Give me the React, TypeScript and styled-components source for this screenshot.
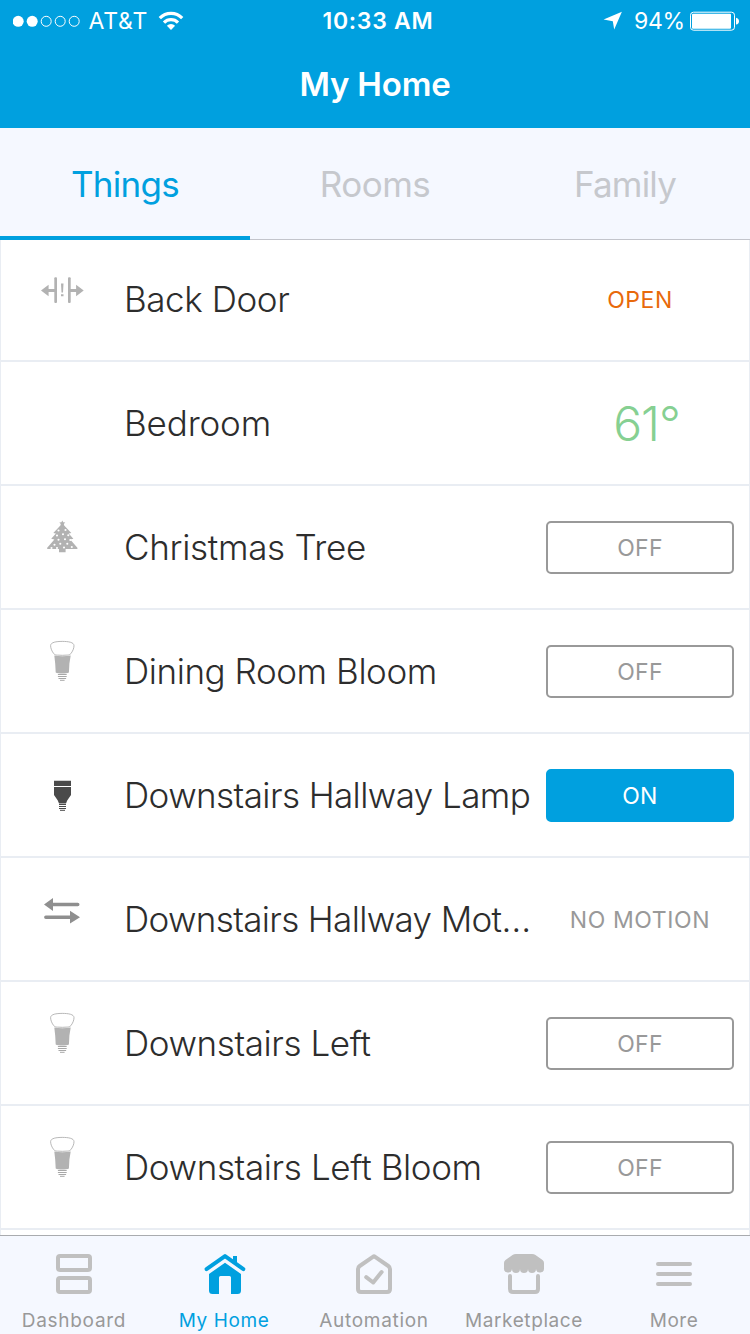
import React from "react";
import styled, { createGlobalStyle } from "styled-components";

const BLUE = "#00a0df";
const PALE = "#f5f8ff";
const LINE = "#e9edf3";

const GlobalStyle = createGlobalStyle`
  *, *::before, *::after { box-sizing: border-box; }
  body {
    margin: 0;
    background: #fff;
    font-family: Inter, "Liberation Sans", sans-serif;
    overflow: hidden;
  }
`;

const Screen = styled.div`
  display: flex;
  flex-direction: column;
  width: 750px;
  height: 1334px;
  overflow: hidden;
  background: #fff;
`;

const Header = styled.header`
  flex: none;
  height: 128px;
  background: ${BLUE};
  color: #fff;
`;

const StatusBar = styled.div`
  display: grid;
  grid-template-columns: 1fr 112px 1fr;
  align-items: center;
  height: 40px;
  padding: 0 11px 0 13px;
  font-size: 23px;
  white-space: nowrap;
`;

const StatusGroup = styled.div<{ $end?: boolean }>`
  display: flex;
  align-items: center;
  height: 40px;
  justify-content: ${(p) => (p.$end ? "flex-end" : "flex-start")};
  svg { display: block; flex: none; }
`;

const StatusText = styled.span<{ $tracking?: number; $left?: number; $right?: number }>`
  line-height: 40px;
  padding-top: 1px;
  letter-spacing: ${(p) => p.$tracking ?? 0}px;
  margin-left: ${(p) => p.$left ?? 0}px;
  margin-right: ${(p) => p.$right ?? 0}px;
`;

const Clock = styled.span`
  line-height: 40px;
  padding: 1px 0 0 2.5px;
  font-weight: 600;
  text-align: left;
  letter-spacing: 0.7px;
`;

const Title = styled.h1`
  margin: 0;
  line-height: 88px;
  text-align: center;
  font-size: 33px;
  font-weight: 600;
  letter-spacing: -0.2px;
`;

const Tabs = styled.nav`
  flex: none;
  position: relative;
  z-index: 1;
  display: grid;
  grid-template-columns: repeat(3, 1fr);
  height: 112px;
  background: ${PALE};
  box-shadow: inset 0 -1px 0 #c3c5cc;
`;

const Tab = styled.a<{ $active?: boolean; $tracking: number }>`
  border-bottom: 4px solid ${(p) => (p.$active ? BLUE : "transparent")};
  color: ${(p) => (p.$active ? BLUE : "#c6c8cd")};
  line-height: 113px;
  height: 112px;
  text-align: center;
  font-size: 35px;
  font-weight: 400;
  letter-spacing: ${(p) => p.$tracking}px;
`;

const List = styled.main`
  flex: 1;
  min-height: 0;
  margin-top: -2px;
  overflow: hidden;
  border: solid ${LINE};
  border-width: 0 1px;
`;

const Row = styled.div`
  display: grid;
  grid-template-columns: 123px 422px 188px;
  height: 124px;
  border-bottom: 2px solid ${LINE};
`;

const IconCell = styled.div`
  padding: 20px 0 0 29px;
  svg { display: block; }
`;

const Name = styled.div<{ $tracking: number }>`
  line-height: 122px;
  height: 122px;
  font-size: 35px;
  font-weight: 300;
  color: #2d2d2d;
  white-space: nowrap;
  letter-spacing: ${(p) => p.$tracking}px;
`;

const Action = styled.div`
  display: flex;
  align-items: center;
  justify-content: center;
  height: 123px;
`;

const Toggle = styled.button<{ $on?: boolean }>`
  width: 188px;
  height: 53px;
  padding: 1px 0 0;
  border: 2px solid ${(p) => (p.$on ? BLUE : "#999")};
  border-radius: 5px;
  background: ${(p) => (p.$on ? BLUE : "#fff")};
  color: ${(p) => (p.$on ? "#fff" : "#999")};
  font: 400 23px/48px Inter, "Liberation Sans", sans-serif;
  letter-spacing: 0.3px;
`;

const State = styled.span<{ $color: string; $tracking: number }>`
  color: ${(p) => p.$color};
  font-size: 23px;
  letter-spacing: ${(p) => p.$tracking}px;
`;

const Temperature = styled.span`
  padding-left: 13px;
  color: #86d092;
  font-size: 48px;
  font-weight: 300;
  letter-spacing: -1px;
`;

const BottomBar = styled.nav`
  flex: none;
  display: grid;
  grid-template-columns: repeat(5, 150px);
  width: 750px;
  height: 99px;
  border-top: 1px solid #a9abaf;
  background: ${PALE};
`;

const BottomItem = styled.a<{ $active?: boolean; $tracking: number }>`
  display: flex;
  flex-direction: column;
  align-items: center;
  padding: 14px 2px 0 0;
  color: ${(p) => (p.$active ? BLUE : "#999")};
  font-size: 19px;
  line-height: 24px;
  letter-spacing: ${(p) => p.$tracking}px;
  svg { display: block; margin-bottom: 11px; }
`;

const SignalDots = () => (
  <svg width="68" height="12" viewBox="0.3 0 68 12">
    {[5.5, 19.5, 33.5, 47.5, 61.5].map((cx, i) =>
      i < 2 ? (
        <circle key={cx} cx={cx} cy="6.3" r="5.5" fill="#fff" />
      ) : (
        <circle key={cx} cx={cx} cy="6.3" r="5" fill="none" stroke="#fff" strokeWidth="1" />
      )
    )}
  </svg>
);

const Wifi = () => (
  <svg width="26" height="20" viewBox="0 0 26 20">
    <g fill="none" stroke="#fff" strokeWidth="3.2">
      <path d="M1.8 7.2a15.6 15.6 0 0 1 22.4 0" />
      <path d="M6 11.6a9.8 9.8 0 0 1 14 0" />
    </g>
    <path d="M13 19l-4.1-4.3a5.8 5.8 0 0 1 8.2 0z" fill="#fff" />
  </svg>
);

const LocationArrow = () => (
  <svg width="19" height="19" viewBox="0 0 19 19">
    <path d="M18.9.8L11.2 18.4 9.800 10.2.6 8.4z" fill="#fff" />
  </svg>
);

const Battery = () => (
  <svg width="49" height="20" viewBox="0 0 49 20">
    <rect x=".5" y="1.2" width="44" height="18" rx="3" fill="none" stroke="#fff" />
    <rect x="2" y="2.7" width="39" height="15" rx="1" fill="#fff" />
    <path d="M46 6.8c2 .4 3 1.6 3 3.4s-1 3-3 3.4z" fill="#fff" />
  </svg>
);

const DoorIcon = () => (
  <svg width="64" height="80" viewBox="0 0 64 80" fill="#b2b2b2">
    <rect x="24.3" y="19.3" width="2.7" height="25.7" rx="1" />
    <rect x="38" y="19.3" width="2.7" height="25.7" rx="1" />
    <path d="M11 32.5l7.6-5.7V31H25v3h-6.4v4.2zM53.7 32.5l-7.6-5.700V31H40v3h6.1v4.2z" />
    <path d="M31 25.5h2.5l-.5 9h-1.5zM31 36.3h2.5v1.9H31z" />
  </svg>
);

const TREE_LIGHTS = [
  [28.5, 24.5], [35.5, 24], [33, 28.3], [27, 29.5], [38.3, 29.3],
  [28.5, 33.8], [35, 33.3], [40.3, 34], [30.3, 37.8], [37.3, 37.8],
  [24.5, 38.8], [21.5, 42], [27, 42], [34, 41.5], [41.8, 41],
];

const TreeIcon = () => (
  <svg width="64" height="80" viewBox="0 0 64 80">
    <path
      fill="#b2b2b2"
      d="M32.3 14.4l.9 1.900 2.1.2-1.5 1.500.4 1.400 7.1 7.600-2.600.6 4.700 5.200-3.200.6 7.200 8.400v1.300h-11.800v3.100h-6.600v-3.100H17.200v-1.300l7.200-8.400-3.200-.6 4.700-5.200-2.600-.6 7.100-7.600.4-1.400-1.500-1.500 2.100-.2z"
    />
    <g fill="#fff">
      {TREE_LIGHTS.map(([x, y]) => (
        <circle key={`${x}-${y}`} cx={x} cy={y} r="1.05" />
      ))}
    </g>
  </svg>
);

const BulbIcon = () => (
  <svg width="64" height="80" viewBox="0 0 64 80">
    <g fill="none" stroke="#b0b0b0" strokeWidth=".9">
      <path d="M32.3 11.4c6 0 11.7.8 11.7 4.3 0 2.6-1.4 5.8-3.2 8-.9 1.1-2 1.3-3.6 1.4-3.2.3-6.6.3-9.8 0-1.6-.1-2.7-.3-3.6-1.4-1.8-2.2-3.2-5.4-3.2-8 0-3.5 5.7-4.3 11.7-4.3z" />
    </g>
    <path d="M24.3 25.5c5 1 11 1 16.4 0l-1.3 8-.5 9.1c-2.2 1.3-11 1.3-13.2 0l-.5-9.1z" fill="#b2b2b2" />
    <path d="M27.9 44.5h8.8M27.9 46.5h8.8M28.500 48.5h7.6M30 50.3h4.6" stroke="#a8a8a8" strokeWidth="1" />
  </svg>
);

const LampIcon = () => (
  <svg width="64" height="80" viewBox="0 0 64 80">
    <path
      d="M24 26.7h17V32H24zM24 33h17v8l-3.8 5.5-1.2 3h-7l-1.2-3L24 41z"
      fill="#4a4a4a"
    />
    <path d="M29 50.5h7M29 52.5h7M29 54.5h7M30 56.3h5" stroke="#4a4a4a" strokeWidth="1" />
  </svg>
);

const MotionIcon = () => (
  <svg width="64" height="80" viewBox="0 0 64 80">
    <path d="M22 26.5h25.8M15.8 39.2H42" stroke="#8f8f8f" strokeWidth="3.4" strokeLinecap="round" />
    <path d="M14 26.5l9-6.5v13zM50 39.2l-10-6.4v12.8z" fill="#8f8f8f" />
  </svg>
);

const DashboardIcon = () => (
  <svg width="48" height="48" viewBox="0 0 48 48" fill="none" stroke="#c0c0c0" strokeWidth="4">
    <rect x="8" y="6" width="32" height="14" rx="2" />
    <rect x="8" y="28" width="32" height="14" rx="2" />
  </svg>
);

const HomeIcon = () => (
  <svg width="48" height="48" viewBox="-0.7 0 48 48" fill={BLUE}>
    <path d="M5.8 19.2L24.3 6.1l18.4 13.1" fill="none" stroke={BLUE} strokeWidth="4" strokeLinecap="round" strokeLinejoin="round" />
    <path d="M32.3 6h4v9l-4-3z" />
    <path d="M24.3 12.7L40.3 24v16.5q0 3.5-3.5 3.5H30.3V27.5q0-1.500-1.5-1.5h-9q-1.500 0-1.5 1.5V44h-6.5q-3.5 0-3.5-3.5V24z" />
  </svg>
);

const AutomationIcon = () => (
  <svg width="48" height="48" viewBox="0 0 48 48" fill="none" stroke="#c0c0c0" strokeWidth="4" strokeLinecap="round" strokeLinejoin="round">
    <path d="M24 6.2L38.3 16q1.7 1.2 1.7 3v20q0 3-3 3H11q-3 0-3-3V19q0-1.8 1.7-3z" />
    <path d="M16.2 27.2l7 5.3L31.6 22" />
  </svg>
);

const MarketIcon = () => (
  <svg width="48" height="48" viewBox="0 0 48 48">
    <path
      fill="#c0c0c0"
      d="M16 4h16q2 0 3.5 1l7 5q1.5 1.2 1.5 3v5a4 4 0 0 1-8 1 4 4 0 0 1-8 0 4 4 0 0 1-8 0 4 4 0 0 1-8 0 4 4 0 0 1-8-1v-5q0-1.8 1.5-3l7-5q1.5-1 3.5-1z"
    />
    <path d="M10 26v13q0 3 3 3h22q3 0 3-3V26" fill="none" stroke="#c0c0c0" strokeWidth="4" strokeLinecap="round" />
  </svg>
);

const MoreIcon = () => (
  <svg width="48" height="48" viewBox="0 0 48 48" stroke="#c0c0c0" strokeWidth="4" strokeLinecap="round">
    <path d="M8 14h32M8 24h32M8 34h32" />
  </svg>
);

type Thing = {
  name: string;
  tracking: number;
  icon?: React.ReactNode;
  action: React.ReactNode;
};

const off = <Toggle>OFF</Toggle>;

const things: Thing[] = [
  { name: "Back Door", tracking: -0.42, icon: <DoorIcon />, action: <State $color="#e8690b" $tracking={0.5}>OPEN</State> },
  { name: "Bedroom", tracking: -0.15, action: <Temperature>61°</Temperature> },
  { name: "Christmas Tree", tracking: -0.3, icon: <TreeIcon />, action: off },
  { name: "Dining Room Bloom", tracking: -0.43, icon: <BulbIcon />, action: off },
  { name: "Downstairs Hallway Lamp", tracking: -0.58, icon: <LampIcon />, action: <Toggle $on>ON</Toggle> },
  { name: "Downstairs Hallway Mot…", tracking: -0.65, icon: <MotionIcon />, action: <State $color="#999" $tracking={0.6}>NO MOTION</State> },
  { name: "Downstairs Left", tracking: -0.41, icon: <BulbIcon />, action: off },
  { name: "Downstairs Left Bloom", tracking: -0.37, icon: <BulbIcon />, action: off },
];

export default function App() {
  return (
    <Screen>
      <GlobalStyle />
      <Header>
        <StatusBar>
          <StatusGroup>
            <SignalDots />
            <StatusText $left={7.5} $right={10} $tracking={0.8}>AT&amp;T</StatusText>
            <Wifi />
          </StatusGroup>
          <Clock>10:33 AM</Clock>
          <StatusGroup $end>
            <LocationArrow />
            <StatusText $left={12} $right={5} $tracking={-0.2}>94%</StatusText>
            <Battery />
          </StatusGroup>
        </StatusBar>
        <Title>My Home</Title>
      </Header>
      <Tabs>
        <Tab $active $tracking={-0.7}>Things</Tab>
        <Tab $tracking={-0.5}>Rooms</Tab>
        <Tab $tracking={-0.8}>Family</Tab>
      </Tabs>
      <List>
        {things.map((t) => (
          <Row key={t.name}>
            <IconCell>{t.icon}</IconCell>
            <Name $tracking={t.tracking}>{t.name}</Name>
            <Action>{t.action}</Action>
          </Row>
        ))}
      </List>
      <BottomBar>
        <BottomItem $tracking={0.7}><DashboardIcon />Dashboard</BottomItem>
        <BottomItem $active $tracking={0.6}><HomeIcon />My Home</BottomItem>
        <BottomItem $tracking={0.7}><AutomationIcon />Automation</BottomItem>
        <BottomItem $tracking={0.6}><MarketIcon />Marketplace</BottomItem>
        <BottomItem $tracking={0.5}><MoreIcon />More</BottomItem>
      </BottomBar>
    </Screen>
  );
}
